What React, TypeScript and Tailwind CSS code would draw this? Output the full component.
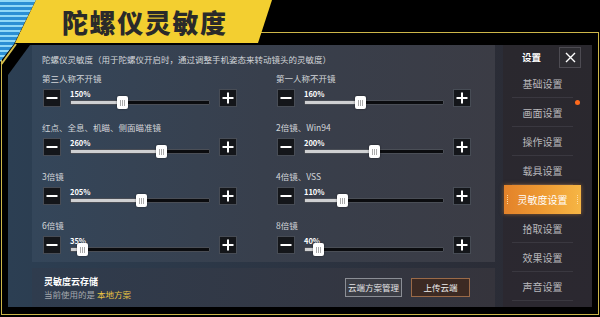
import React from "react";

const FONT = "font-['Noto_Sans_CJK_SC','Noto_Sans',sans-serif]";

const ROWS = [
  { label: "第三人称不开镜", value: 150 },
  { label: "第一人称不开镜", value: 160 },
  { label: "红点、全息、机瞄、侧面瞄准镜", value: 260 },
  { label: "2倍镜、Win94", value: 200 },
  { label: "3倍镜", value: 205 },
  { label: "4倍镜、VSS", value: 110 },
  { label: "6倍镜", value: 35 },
  { label: "8倍镜", value: 40 },
];

const MENU = ["基础设置", "画面设置", "操作设置", "载具设置", "灵敏度设置", "拾取设置", "效果设置", "声音设置"];
const ACTIVE = "灵敏度设置";

function StepButton({ plus }: { plus?: boolean }) {
  return (
    <div className="w-[18px] h-[18px] shrink-0 bg-[#14161a] border border-[#474c55] flex items-center justify-center">
      <svg width="12" height="12" viewBox="0 0 12 12">
        <path d={plus ? "M6 0.5v11M0.5 6h11" : "M0.5 6h11"} stroke="#fff" strokeWidth="2" />
      </svg>
    </div>
  );
}

function SliderRow({ label, value }: { label: string; value: number }) {
  const frac = value / 400;
  return (
    <div className="flex flex-col">
      <div className="h-[12px] leading-[12px] text-[8.5px] text-[#d3d6da] whitespace-nowrap">{label}</div>
      <div className="mt-[5px] ml-[1px] flex h-[18px]">
        <StepButton />
        <div className="relative mx-[9px] w-[140px]">
          <div className="h-[9px] leading-[9px] text-[7.5px] font-bold text-white">{value}%</div>
          <div className="mt-[2px] h-[5px] w-full bg-[#0b0c0f] border border-[#4a4e56] rounded-[1px] overflow-hidden">
            <div className="h-full bg-[#cfd0d2]" style={{ width: `${frac * 100}%` }} />
          </div>
          <div
            className="absolute top-[7px] w-[11px] h-[13px] bg-white rounded-[2px] flex items-center justify-center gap-[1px] shadow-[0_0_2px_rgba(0,0,0,0.6)]"
            style={{ left: `${frac * 140 - 5.5}px` }}
          >
            <span className="w-px h-[6px] bg-[#a9a9a9]" />
            <span className="w-px h-[6px] bg-[#a9a9a9]" />
            <span className="w-px h-[6px] bg-[#a9a9a9]" />
          </div>
        </div>
        <StepButton plus />
      </div>
    </div>
  );
}

function Sidebar() {
  return (
    <div className="w-[89px] shrink-0 bg-gradient-to-b from-[#2a282e] to-[#2b2830] pl-[1px] pr-[11px] flex flex-col">
      <div className="h-[24px] flex items-center">
        <div className="flex-1 text-center text-[9.5px] font-bold text-white">设置</div>
        <div className="w-[22px] h-[21px] border border-[#4d4b52] bg-[#2d2c31] flex items-center justify-center">
          <svg width="11" height="11" viewBox="0 0 11 11">
            <path d="M1 1l9 9M10 1l-9 9" stroke="#fff" strokeWidth="1.4" />
          </svg>
        </div>
      </div>
      {MENU.map((item) =>
        item === ACTIVE ? (
          <div
            key={item}
            className="relative h-[29px] flex items-center justify-center bg-gradient-to-r from-[#e3822a] via-[#ee9a32] to-[#f6b645] text-[10px] text-white shadow-[0_0_4px_rgba(240,150,50,0.5)]"
          >
            <span className="absolute left-[3px] top-[10px] w-[2px] h-[9px] border-l border-dotted border-[#ffd9a0]" />
            {item}
            <span className="absolute right-[3px] top-[10px] w-[2px] h-[9px] border-r border-dotted border-[#ffd9a0]" />
          </div>
        ) : (
          <div key={item} className="relative h-[29px] mx-[8px] flex items-center justify-center border-b border-[#3a3840] text-[10px] text-[#b9b8bc]">
            {item}
            {item === "画面设置" && (
              <span className="absolute -right-[7px] top-[2px] w-[5px] h-[5px] rounded-full bg-[#ff6a1c]" />
            )}
          </div>
        )
      )}
    </div>
  );
}

export default function App() {
  return (
    <div className={`relative w-[600px] h-[317px] bg-black overflow-hidden ${FONT}`}>
      <div className="ml-[1px] mt-[32px] w-[598px] h-[283px] border border-[#cdb649] pl-[6px] pr-[6px] pt-[12px] pb-[7px]">
        <div className="h-full flex bg-gradient-to-r from-[#2c3f53] to-[#2a2931] [clip-path:polygon(22px_0,100%_0,100%_100%,0_100%,0_30px)]">
          <div className="w-[495px] shrink-0 pl-[24px] pr-[8px] flex flex-col">
            <div className="h-[217px] bg-gradient-to-r from-[#34465a] via-[#383f4c] to-[#3b3c45] pt-[8px] pl-[10px]">
              <div className="h-[12px] leading-[12px] text-[8.5px] text-[#d3d6da] whitespace-nowrap">
                陀螺仪灵敏度（用于陀螺仪开启时，通过调整手机姿态来转动镜头的灵敏度）
              </div>
              <div className="mt-[7px] grid grid-cols-[195px_195px] gap-x-[39px] gap-y-[14px]">
                {ROWS.map((r) => (
                  <SliderRow key={r.label} label={r.label} value={r.value} />
                ))}
              </div>
            </div>
            <div className="mt-[6px] flex-1 bg-gradient-to-r from-[#2f3c4e] to-[#35343c] pl-[12px] pr-[25px] flex items-center justify-between">
              <div className="flex flex-col">
                <div className="h-[12px] leading-[12px] text-[9px] font-bold text-white">灵敏度云存储</div>
                <div className="h-[12px] leading-[12px] text-[8.5px] text-[#a4a8ae]">
                  当前使用的是 <span className="text-[#e9c443]">本地方案</span>
                </div>
              </div>
              <div className="flex gap-[9px]">
                <div className="w-[57px] h-[19px] bg-[#3b3d45] border border-[#8b8e95] flex items-center justify-center text-[8.5px] text-[#e4e4e6]">
                  云端方案管理
                </div>
                <div className="w-[59px] h-[19px] bg-[#3c2a23] border border-[#9a6a48] flex items-center justify-center text-[8.5px] text-[#efefef]">
                  上传云端
                </div>
              </div>
            </div>
          </div>
          <Sidebar />
        </div>
      </div>

      {/* decorations */}
      <div className="absolute left-0 top-0 w-[40px] h-[64px] bg-[repeating-linear-gradient(180deg,#8fd8f7_0px,#8fd8f7_2px,#2b8fd4_2px,#2b8fd4_5px)] [clip-path:polygon(0_0,36px_0,14px_44px,0_62px)]" />
      <svg className="absolute left-0 top-0" width="20" height="70" viewBox="0 0 20 70">
        <path d="M1.5 64 L16 44" stroke="#d7bf4c" strokeWidth="2" />
      </svg>
      <div className="absolute left-0 top-0 w-[272px] h-[43px] bg-[#f3cf30] [clip-path:polygon(36px_0,272px_0,258px_43px,15px_43px)] flex items-center pl-[62px]">
        <span className="text-[26px] leading-none font-black tracking-[1.6px] text-[#2a2a2a]">陀螺仪灵敏度</span>
      </div>
    </div>
  );
}
